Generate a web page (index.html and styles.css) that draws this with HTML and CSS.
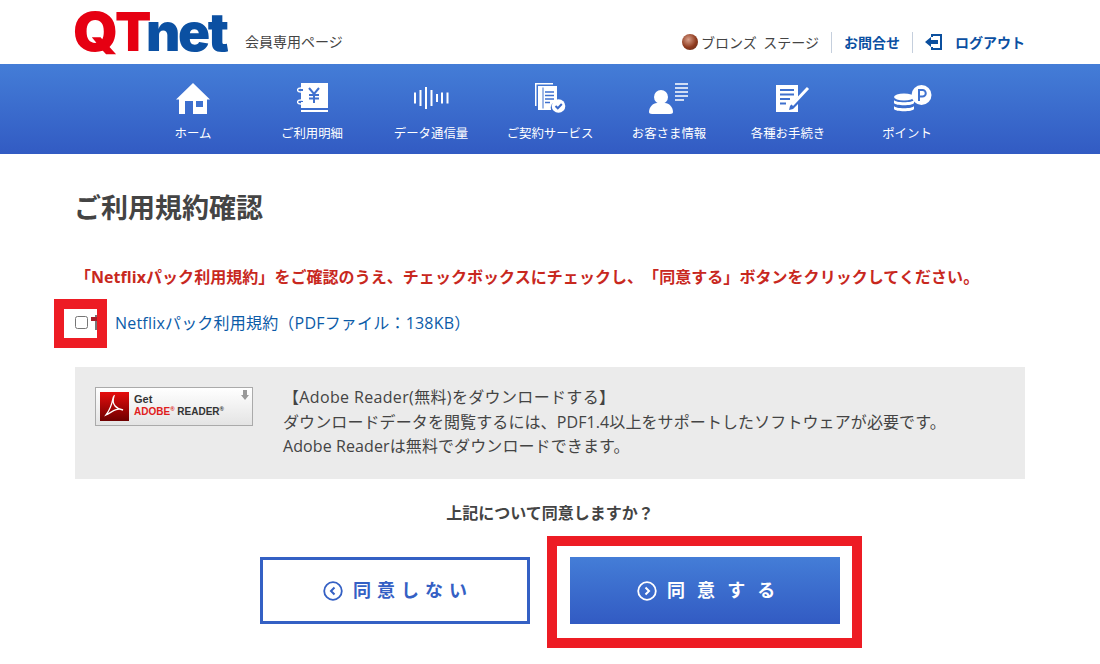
FILE: index.html
```html
<!DOCTYPE html>
<html lang="ja">
<head>
    <meta charset="UTF-8">
    <title>ご利用規約確認</title>
    <link rel="stylesheet" href="styles.css">
</head>
<body>

    <header class="top">
        <div class="top-inner">
            <div class="brand">
                <div class="logo"><span class="logo-q">Q</span><span class="logo-red">T</span><span class="logo-blue">net</span></div>
                <div class="brand-sub">会員専用ページ</div>
            </div>
            <div class="top-links">
                <span class="stage"><span class="medal"></span>ブロンズ ステージ</span>
                <a class="top-link" href="#">お問合せ</a>
                <a class="top-link logout" href="#">
                    <svg width="18" height="18" viewBox="0 0 18 18">
                        <path d="M6 1h11v16H6v-3h2v1h7V3H8v1H6z" fill="#0b4f9e"/>
                        <path d="M0 9l6-5v3h7v4H6v3z" fill="#0b4f9e"/>
                    </svg>
                    ログアウト
                </a>
            </div>
        </div>
    </header>

    <nav class="nav">
        <a class="nav-item" href="#">
            <span class="nav-icon">
                <svg width="34" height="31" viewBox="0 0 34 31">
                    <path d="M17 0L34 16.500H31V31H17V18H9V31H3V16.500H0z" fill="#fff"/>
                    <path d="M17 18h3v6h7v-6h-7" fill="#fff"/>
                    <path d="M20 18h7v6h-7z" fill="#3f72d0"/>
                </svg>
            </span>
            ホーム
        </a>
        <a class="nav-item" href="#">
            <span class="nav-icon">
                <svg width="31" height="30" viewBox="0 0 31 30">
                    <path d="M4 0h27v25H4v-6h2v-2H4V8h2V6H4z" fill="#fff"/>
                    <path d="M4 27h27v2H4z" fill="#fff"/>
                    <path d="M12 5l5 6 5-6M17 11v9M12 12h10M12 15.500h10" fill="none" stroke="#3f70ce" stroke-width="2"/>
                    <ellipse cx="4" cy="7" rx="3.500" ry="2" fill="none" stroke="#fff" stroke-width="1.300"/>
                    <ellipse cx="4" cy="19" rx="3.500" ry="2" fill="none" stroke="#fff" stroke-width="1.300"/>
                </svg>
            </span>
            ご利用明細
        </a>
        <a class="nav-item" href="#">
            <span class="nav-icon">
                <svg width="35" height="22" viewBox="0 0 35 22">
                    <path d="M1 5.500v11M6.500 3v16M12 0v22M17.500 3v16M23 7v8M28 5.500v11M33.500 5.500v11" fill="none" stroke="#fff" stroke-width="2"/>
                </svg>
            </span>
            データ通信量
        </a>
        <a class="nav-item" href="#">
            <span class="nav-icon">
                <svg width="31" height="30" viewBox="0 0 31 30">
                    <path d="M0 0h18v1.500H1.500V23H0z" fill="#fff"/>
                    <path d="M3 3h19v15a7 7 0 0 0-6 9H3z" fill="#fff"/>
                    <path d="M8 4.500v21" fill="none" stroke="#3f70ce" stroke-width="1"/>
                    <path d="M10 9h9M10 12.500h9M10 16h9M10 19.500h5" fill="none" stroke="#3f70ce" stroke-width="1.500"/>
                    <circle cx="23.500" cy="23" r="6.800" fill="#fff"/>
                    <path d="M20.500 23l2.300 2.300 4-4.300" fill="none" stroke="#3a68c9" stroke-width="2"/>
                </svg>
            </span>
            ご契約サービス
        </a>
        <a class="nav-item" href="#">
            <span class="nav-icon">
                <svg width="40" height="31" viewBox="0 0 40 31">
                    <circle cx="12" cy="14" r="7" fill="#fff"/>
                    <path d="M0 29c0-5 4-9 8-9h8c4 0 8 4 8 9 0 1-1 2-3 2H3c-2 0-3-1-3-2z" fill="#fff"/>
                    <path d="M26 1h13M26 5h13M26 9h13M26 13h13M26 17h9" fill="none" stroke="#fff" stroke-width="1.300"/>
                </svg>
            </span>
            お客さま情報
        </a>
        <a class="nav-item" href="#">
            <span class="nav-icon icon-form">
                <svg width="34" height="27" viewBox="0 0 34 27">
                    <path d="M0 0h22v12L14 21l-1 4 4-1 5-5v8H0z" fill="#fff"/>
                    <path d="M4 5h14M4 9.500h14M4 14h10M4 18.500h6" fill="none" stroke="#3f70ce" stroke-width="1.800"/>
                    <path d="M16 20L32 3" fill="none" stroke="#fff" stroke-width="3"/>
                </svg>
            </span>
            各種お手続き
        </a>
        <a class="nav-item" href="#">
            <span class="nav-icon icon-point">
                <svg width="38" height="27" viewBox="0 0 38 27">
                    <circle cx="27.500" cy="10" r="10" fill="#fff"/>
                    <path d="M25 16V5h3.500a3.200 3.200 0 0 1 0 6.500H25" fill="none" stroke="#3f72d0" stroke-width="2"/>
                    <ellipse cx="10" cy="12" rx="10" ry="3.500" fill="#fff"/>
                    <path d="M0 15c1 3 19 3 20 0v3c-1 3-19 3-20 0z" fill="#fff"/>
                    <path d="M0 21c1 3 19 3 20 0v3c-1 3-19 3-20 0z" fill="#fff"/>
                </svg>
            </span>
            ポイント
        </a>
    </nav>

    <main class="main">
        <h1 class="title">ご利用規約確認</h1>
        <p class="notice">「Netflixパック利用規約」をご確認のうえ、チェックボックスにチェックし、「同意する」ボタンをクリックしてください。</p>

        <div class="terms">
            <input class="terms-check" type="checkbox">
            <span class="pdf-icon"></span>
            <a class="terms-link" href="#">Netflixパック利用規約（PDFファイル：138KB）</a>
        </div>

        <div class="adobe">
            <div class="adobe-badge">
                <svg class="adobe-logo" width="29" height="29" viewBox="0 0 29 29">
                    <defs>
                        <linearGradient id="adobeRed" x1="0" y1="0" x2="0" y2="1">
                            <stop offset="0" stop-color="#e60d0d"/>
                            <stop offset="1" stop-color="#6e0000"/>
                        </linearGradient>
                    </defs>
                    <rect width="29" height="29" fill="url(#adobeRed)"/>
                    <path d="M14 4c-2 1 0 8-8 19 5-2 10-8 17-5-6-1-12-5-9-14z" fill="none" stroke="#fff" stroke-width="1.300"/>
                </svg>
                <div class="adobe-text">
                    <div class="adobe-get">Get</div>
                    <div class="adobe-name"><span class="adobe-word">ADOBE<sup>®</sup></span> READER<sup>®</sup></div>
                </div>
                <span class="adobe-arrow"></span>
            </div>
            <div class="adobe-desc">
                <p class="adobe-head">【Adobe Reader(無料)をダウンロードする】</p>
                <p>ダウンロードデータを閲覧するには、PDF1.4以上をサポートしたソフトウェアが必要です。</p>
                <p>Adobe Readerは無料でダウンロードできます。</p>
            </div>
        </div>

        <p class="question">上記について同意しますか？</p>

        <div class="buttons">
            <a class="btn btn-no" href="#">
                <svg width="20" height="20" viewBox="0 0 20 20">
                    <circle cx="10" cy="10" r="8.800" fill="none" stroke="#3460c4" stroke-width="1.800"/>
                    <path d="M11.500 6.500L8 10l3.500 3.500" fill="none" stroke="#3460c4" stroke-width="2"/>
                </svg>
                同意しない
            </a>
            <a class="btn btn-yes" href="#">
                <svg width="20" height="20" viewBox="0 0 20 20">
                    <circle cx="10" cy="10" r="8.800" fill="none" stroke="#fff" stroke-width="1.800"/>
                    <path d="M8.500 6.500L12 10l-3.500 3.500" fill="none" stroke="#fff" stroke-width="2"/>
                </svg>
                同 意 す る
            </a>
        </div>

        <!-- red marks that were drawn on top of the screenshot -->
        <div class="mark mark-check"></div>
        <div class="mark mark-agree"></div>
    </main>

</body>
</html>
```

FILE: styles.css
```css
* {
    box-sizing: border-box;
}

body {
    margin: 0;
    font-family: "Open Sans", "Noto Sans CJK JP", sans-serif;
    color: #444;
    background-color: #fff;
    text-spacing-trim: space-all;
}

a {
    text-decoration: none;
}

p {
    margin: 0;
}

.top {
    height: 64px;
}

.top-inner {
    width: 950px;
    height: 64px;
    margin: 0 auto;
    display: flex;
    justify-content: space-between;
}

.brand {
    display: flex;
}

.logo {
    width: 170px;
    font-family: Inter, "Liberation Sans", sans-serif;
    font-size: 53px;
    font-weight: 900;
    line-height: 65px;
    letter-spacing: -2.400px;
    white-space: nowrap;
}

.logo-q {
    display: inline-block;
    width: 42px;
    margin-left: -2px;
    color: #e60012;
    transform: scaleX(1.080);
    transform-origin: left center;
}

.logo-red {
    color: #e60012;
}

.logo-blue {
    color: #0b50a2;
}

.brand-sub {
    padding-top: 31px;
    font-size: 14px;
    line-height: 22px;
}

.top-links {
    display: flex;
    align-items: center;
    padding-top: 20px;
    height: 64px;
    font-size: 14px;
}

.stage {
    display: flex;
    align-items: center;
    gap: 3px;
    padding-right: 12px;
    height: 21px;
    white-space: nowrap;
    word-spacing: 3px;
}

.medal {
    width: 16px;
    height: 16px;
    border-radius: 50%;
    background: radial-gradient(circle at 40% 35%, #d9a08a, #8f3a1e 55%, #5c2a1a);
}

.top-link {
    display: flex;
    align-items: center;
    height: 21px;
    padding-left: 12px;
    padding-right: 12px;
    border-left: 1px solid #c5cfdd;
    color: #0b50a2;
    font-weight: 700;
    white-space: nowrap;
}

.logout {
    gap: 12px;
    padding-right: 0;
}

.nav {
    height: 90px;
    display: flex;
    justify-content: center;
    background: linear-gradient(#447dd7, #325bc3);
}

.nav-item {
    width: 119px;
    display: flex;
    flex-direction: column;
    align-items: center;
    color: #fff;
    font-size: 12.400px;
    line-height: 20px;
}

.nav-icon {
    height: 50px;
    margin-top: 9px;
    margin-bottom: 1px;
    display: flex;
    align-items: center;
    justify-content: center;
}

.icon-form {
    margin-left: 10px;
}

.icon-point {
    margin-left: 12px;
}

.main {
    position: relative;
    width: 950px;
    margin: 0 auto;
    padding-bottom: 40px;
}

.title {
    margin: 0 0 0 -1px;
    padding-top: 35px;
    font-size: 27px;
    font-weight: 700;
    line-height: 38px;
    color: #444;
}

.notice {
    margin-top: 38px;
    font-size: 16px;
    font-weight: 700;
    line-height: 24px;
    letter-spacing: 0.050px;
    color: #c8281e;
    white-space: nowrap;
}

.terms {
    margin-top: 21px;
    height: 24px;
    display: flex;
    align-items: center;
}

.terms-check {
    width: 13px;
    height: 13px;
    margin: 0;
}

.pdf-icon {
    width: 16px;
    height: 15px;
    margin-left: 3px;
    background:
        linear-gradient(#a3202a, #a3202a) 0 2px / 16px 4px no-repeat,
        linear-gradient(#777, #777) 4px 0 / 2px 15px no-repeat;
}

.terms-link {
    margin-left: 8px;
    color: #0b5ba8;
    font-size: 16px;
    letter-spacing: 0.200px;
}

.adobe {
    margin-top: 33px;
    height: 112px;
    padding: 20px;
    display: flex;
    background-color: #ebebeb;
}

.adobe-badge {
    position: relative;
    width: 158px;
    height: 39px;
    padding: 4px;
    display: flex;
    gap: 5px;
    border: 1px solid #aaa;
    background: linear-gradient(#fff, #e4e4e4);
}

.adobe-text {
    padding-top: 1px;
    font-family: "Liberation Sans", sans-serif;
    font-weight: 700;
    color: #333;
}

.adobe-get {
    font-size: 11px;
    line-height: 13px;
}

.adobe-name {
    font-size: 10px;
    line-height: 12px;
    white-space: nowrap;
}

.adobe-name sup {
    font-size: 6px;
    line-height: 0;
}

.adobe-word {
    color: #e0201c;
}

.adobe-arrow {
    position: absolute;
    top: 2px;
    right: 3px;
    width: 8px;
    height: 10px;
    background-color: #999;
    clip-path: polygon(25% 0, 75% 0, 75% 50%, 100% 50%, 50% 100%, 0 50%, 25% 50%);
}

.adobe-desc {
    margin-left: 30px;
    font-size: 16px;
    line-height: 24.500px;
    letter-spacing: 0.100px;
    color: #444;
}

.adobe-head {
    margin-top: -2px;
    letter-spacing: 0.350px;
}

.question {
    margin-top: 22px;
    text-align: center;
    font-size: 16px;
    font-weight: 700;
    line-height: 24px;
}

.buttons {
    margin-top: 32px;
    display: flex;
    justify-content: center;
    gap: 40px;
}

.btn {
    width: 270px;
    height: 67px;
    padding-left: 6px;
    padding-bottom: 3px;
    display: flex;
    align-items: center;
    justify-content: center;
    gap: 10px;
    font-size: 18px;
    font-weight: 700;
}

.btn svg {
    margin-top: 3px;
}

.btn-no {
    border: 3px solid #3460c4;
    color: #3460c4;
    letter-spacing: 6px;
}

.btn-yes {
    background: linear-gradient(#447dd7, #325bc3);
    color: #fff;
    letter-spacing: 3.700px;
}

.mark {
    position: absolute;
    border: 10px solid #ed1c24;
}

.mark-check {
    left: -21px;
    top: 145px;
    width: 53px;
    height: 49px;
}

.mark-agree {
    left: 472px;
    top: 382px;
    width: 315px;
    height: 112px;
}
```
